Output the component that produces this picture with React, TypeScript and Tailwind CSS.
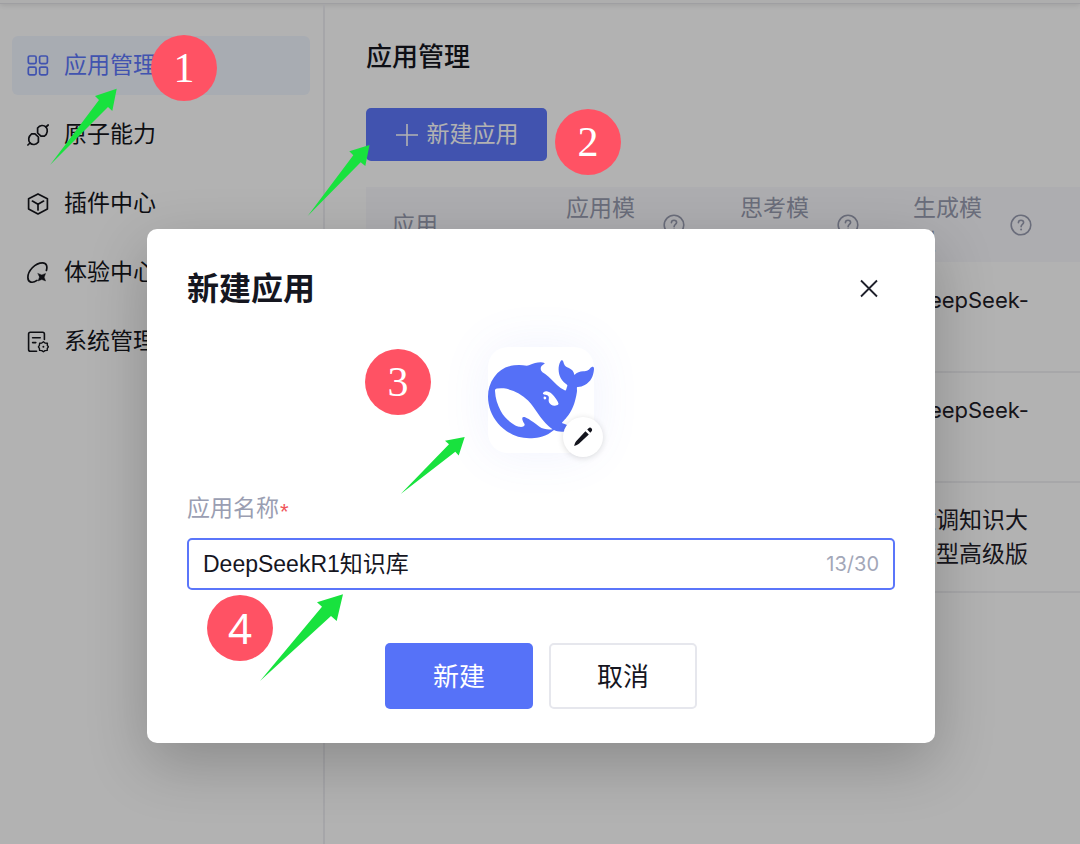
import { useState, type ReactNode } from "react";

const SANS = "font-[Inter,'Noto_Sans_CJK_SC',sans-serif]";

const GridIcon = () => (
  <svg viewBox="0 0 22 22" className="size-[22px]" fill="none" stroke="currentColor" strokeWidth="1.7" aria-hidden="true">
    <rect x="1.3" y="1" width="7.8" height="7.6" rx="1.6" />
    <rect x="12.6" y="1" width="7.8" height="7.6" rx="1.6" />
    <rect x="1.3" y="12.2" width="7.8" height="7.6" rx="1.6" />
    <rect x="12.6" y="12.2" width="7.8" height="7.6" rx="1.6" />
  </svg>
);

const PlugIcon = () => (
  <svg viewBox="0 0 22 22" className="size-[22px]" fill="none" stroke="currentColor" strokeWidth="1.7" strokeLinecap="round" strokeLinejoin="round" aria-hidden="true">
    <path d="M0.9 21 3 19" />
    <path d="M19 3 21.2 1" />
    <path d="M11.4 18V13L8 9.8H4.6C1.2 12.5 1 16.5 3 19 5.5 21.3 9 21 11.4 18Z" />
    <path d="M10.6 4V9L14 12.2H17.4C20.8 9.5 21 5.5 19 3 16.5 0.7 13 1 10.6 4Z" />
  </svg>
);

const CubeIcon = () => (
  <svg viewBox="0 0 22 22" className="size-[22px]" fill="none" stroke="currentColor" strokeWidth="1.7" strokeLinecap="round" strokeLinejoin="round" aria-hidden="true">
    <path d="M11 0.9 20.4 5.8V16L11 21 1.6 16V5.8Z" />
    <path d="M5.4 8.1 11 11.3 16.6 8.1" />
    <path d="M11 11.3V16.9" />
  </svg>
);

const OrbitIcon = () => (
  <svg viewBox="0 0 22 22" className="size-[22px]" fill="none" stroke="currentColor" strokeWidth="1.7" strokeLinecap="round" aria-hidden="true">
    <path d="M19.4 8.5C20.6 4.5 19.5 0.9 15.6 0.9 8 0.9 0.7 9 0.9 15.6 1 20.6 5.5 21.6 10 18.4" />
    <path d="M11 11.4 14.8 12.9 18.6 11.4 17.2 15.2 18.6 19 14.8 17.5 11 19 12.4 15.2Z" fill="currentColor" strokeWidth="0.4" />
  </svg>
);

const SettingsDocIcon = () => (
  <svg viewBox="0 0 22 22" className="size-[22px]" fill="none" stroke="currentColor" strokeWidth="1.6" strokeLinecap="round" strokeLinejoin="round" aria-hidden="true">
    <path d="M9.6 20.2H3.4C2.4 20.2 1.6 19.4 1.6 18.4V3C1.6 2 2.4 1.2 3.4 1.2H15.6C16.6 1.2 17.4 2 17.4 3V8.4" />
    <path d="M5.6 6.8H13.2M5.6 11.6H8.8" />
    <path d="M16.4 10.8 18 12 20.4 12.3 20.3 14.4 21.4 15.8 20.3 17.4 20.2 19.4 18 19.6 16.4 20.8 14.8 19.6 12.6 19.4 12.4 17.4 11.4 15.8 12.4 14.4 12.6 12.3 14.8 12Z" strokeWidth="1.4" />
    <circle cx="16.4" cy="15.8" r="1" fill="currentColor" stroke="none" />
  </svg>
);

const HelpIcon = () => (
  <svg viewBox="0 0 22 22" className="size-[22px] shrink-0" fill="none" stroke="currentColor" strokeWidth="1.6" strokeLinecap="round" aria-hidden="true">
    <circle cx="11" cy="11" r="9.8" />
    <path d="M8.4 8.8C8.4 7.2 9.5 6.2 11 6.2S13.6 7.1 13.6 8.6C13.6 10.4 11.1 10.6 11.1 12.7" />
    <circle cx="11.1" cy="15.6" r="1" fill="currentColor" stroke="none" />
  </svg>
);

const WhaleLogo = () => (
  <svg viewBox="0 0 24 24" className="size-full" fill="#5570f7" role="img" aria-label="DeepSeek">
    <path d="M23.748 4.482c-.254-.124-.364.113-.512.234-.051.039-.094.09-.137.136-.372.397-.806.657-1.373.626-.829-.046-1.537.214-2.163.848-.133-.782-.575-1.248-1.247-1.548-.352-.156-.708-.311-.955-.65-.172-.241-.219-.51-.305-.774-.055-.16-.11-.323-.293-.35-.2-.031-.278.136-.356.276-.313.572-.434 1.202-.422 1.84.027 1.436.633 2.58 1.838 3.393.137.093.172.187.129.323-.082.28-.18.552-.266.833-.055.179-.137.217-.329.14a5.526 5.526 0 01-1.736-1.18c-.857-.828-1.631-1.742-2.597-2.458a11.365 11.365 0 00-.689-.471c-.985-.957.13-1.743.388-1.836.27-.098.093-.432-.779-.428-.872.004-1.67.295-2.687.684a3.055 3.055 0 01-.465.137 9.597 9.597 0 00-2.883-.102c-1.885.21-3.39 1.102-4.497 2.623C.082 8.606-.231 10.684.152 12.85c.403 2.284 1.569 4.175 3.36 5.653 1.858 1.533 3.997 2.284 6.438 2.14 1.482-.085 3.133-.284 4.994-1.86.47.234.962.327 1.78.397.63.059 1.236-.03 1.705-.128.735-.156.684-.837.419-.961-2.155-1.004-1.682-.595-2.113-.926 1.096-1.296 2.746-2.642 3.392-7.003.05-.347.007-.565 0-.845-.004-.17.035-.237.23-.256a4.173 4.173 0 001.545-.475c1.396-.763 1.96-2.015 2.093-3.517.02-.23-.004-.467-.247-.588zM11.581 18c-2.089-1.642-3.102-2.183-3.52-2.16-.392.024-.321.471-.235.763.09.288.207.486.371.739.114.167.192.416-.113.603-.673.416-1.842-.14-1.897-.167-1.361-.802-2.5-1.86-3.301-3.307-.774-1.393-1.224-2.887-1.298-4.482-.02-.386.093-.522.477-.592a4.696 4.696 0 011.529-.039c2.132.312 3.946 1.265 5.468 2.774.868.86 1.525 1.887 2.202 2.891.72 1.066 1.494 2.082 2.48 2.914.348.292.625.514.891.677-.802.09-2.14.11-3.054-.614zm1-6.44a.306.306 0 01.415-.287.302.302 0 01.2.288.306.306 0 01-.31.307.303.303 0 01-.304-.308zm3.11 1.596c-.2.081-.399.151-.59.16a1.245 1.245 0 01-.798-.254c-.274-.23-.47-.358-.552-.758a1.73 1.73 0 01.016-.588c.07-.327-.008-.537-.239-.727-.187-.156-.426-.199-.688-.199a.559.559 0 01-.254-.078c-.11-.054-.2-.172-.114-.338.028-.054.16-.186.192-.21.356-.202.767-.136 1.146.016.352.144.618.408 1.001.782.391.451.462.576.685.914.176.265.336.537.445.848.067.195-.019.354-.25.452z" />
  </svg>
);

const navItems: { label: string; icon: ReactNode; active?: boolean }[] = [
  { label: "应用管理", icon: <GridIcon />, active: true },
  { label: "原子能力", icon: <PlugIcon /> },
  { label: "插件中心", icon: <CubeIcon /> },
  { label: "体验中心", icon: <OrbitIcon /> },
  { label: "系统管理", icon: <SettingsDocIcon /> },
];

const models = [
  { name: "DeepSeek-R1", size: "text-[22px]" },
  { name: "DeepSeek-R1", size: "text-[22px]" },
  { name: "微调知识大模型高级版", size: "text-[23px]" },
];

function Sidebar() {
  return (
    <nav className="flex w-[325px] shrink-0 flex-col gap-[10px] border-r-2 border-[#eeeef2] pl-3 pr-[13px] pt-8">
      {navItems.map((item) => (
        <a
          key={item.label}
          href="#"
          className={
            item.active
              ? "flex h-[59px] items-center gap-[15px] rounded-md bg-[#f1f6ff] px-[15px] text-[23px] text-[#5d78fb]"
              : "flex h-[59px] items-center gap-[15px] rounded-md px-[15px] text-[23px] text-[#15161c]"
          }
        >
          {item.icon}
          {item.label}
        </a>
      ))}
    </nav>
  );
}

function HeadCell({ label }: { label: string }) {
  return (
    <th className="pl-[26px] text-left font-normal">
      <span className="flex items-center gap-[27px]">
        <span className="w-[70px]">{label}</span>
        <HelpIcon />
      </span>
    </th>
  );
}

function AppTable() {
  return (
    <table className="mt-[26px] w-full table-fixed text-[23px] leading-[34px] text-[#1f2029]">
      <colgroup>
        <col className="w-[174px]" />
        <col className="w-[174px]" />
        <col className="w-[173px]" />
        <col />
      </colgroup>
      <thead className="bg-[#f8f8fc] text-[#989cb0]">
        <tr className="h-[75px]">
          <th className="pl-[26px] text-left font-normal">应用</th>
          <HeadCell label="应用模型" />
          <HeadCell label="思考模型" />
          <HeadCell label="生成模型" />
        </tr>
      </thead>
      <tbody>
        {models.map((model, i) => (
          <tr key={i} className="h-[110px] border-b-2 border-[#f0f0f3]">
            <td />
            <td />
            <td />
            <td className={`pl-[26px] pr-[51px] ${model.size}`}>{model.name}</td>
          </tr>
        ))}
      </tbody>
    </table>
  );
}

function CreateDialog() {
  const [name, setName] = useState("DeepSeekR1知识库");
  return (
    <div className="absolute inset-0 flex items-start justify-center bg-black/30 pl-0.5 pt-[229px]">
      <div
        role="dialog"
        aria-labelledby="dialog-title"
        className="w-full max-w-[788px] rounded-[10px] bg-white px-10 pb-[34px] pt-10 shadow-[0_20px_60px_rgba(0,0,0,0.22)]"
      >
        <div className="flex h-10 items-center justify-between">
          <h2 id="dialog-title" className="text-[32px] font-bold text-[#15161f]">新建应用</h2>
          <button type="button" aria-label="关闭" className="p-4">
            <svg viewBox="0 0 20 20" className="size-5" fill="none" stroke="#1f202b" strokeWidth="1.8" aria-hidden="true">
              <path d="M2 1.5 18 17.5M18 1.5 2 17.5" />
            </svg>
          </button>
        </div>

        <div className="relative mx-auto mt-[38px] size-[106px] rounded-[20px] bg-white shadow-[0_0_50px_rgba(85,112,247,0.09)]">
          <WhaleLogo />
          <button
            type="button"
            aria-label="更换图标"
            className="absolute -bottom-1 -right-[9px] flex size-10 items-center justify-center rounded-full bg-white shadow-[0_1px_6px_rgba(0,0,0,0.14)]"
          >
            <svg viewBox="0 0 20 20" className="size-5" fill="#14151e" aria-hidden="true">
              <path d="M12.4 4.2 15.8 7.4 6.2 16.6C4.9 17.7 3 18.7 1.2 18.9 1.5 17 2.4 15.1 3.6 13.8Z" />
              <path d="M14.2 2.6 15.6 1.2C16.4 0.4 17.6 0.4 18.4 1.2 19.3 2.1 19.4 3.3 18.6 4.2L17.3 5.8Z" />
            </svg>
          </button>
        </div>

        <label htmlFor="app-name" className="mt-[38px] flex items-center text-[23px] leading-[34px] text-[#9a9eb2]">
          应用名称
          <span className="ml-px pt-2 text-[22px] leading-none text-[#f0555b] font-['Liberation_Sans',sans-serif]">*</span>
        </label>
        <div className="mt-[13px] flex h-[52px] items-center rounded-[5px] border-2 border-[#5b76fa] px-[14px]">
          <input
            id="app-name"
            value={name}
            maxLength={30}
            onChange={(e) => setName(e.target.value)}
            className="min-w-0 flex-1 font-['Liberation_Sans','Noto_Sans_CJK_SC',sans-serif] text-[23px] text-[#15161f] outline-none"
          />
          <span className="text-[20px] text-[#a3a7b8]">13/30</span>
        </div>

        <div className="mt-[53px] flex justify-center gap-4 text-[26px]">
          <button type="button" className="h-[66px] w-[148px] rounded-[5px] bg-[#5672f8] text-white">新建</button>
          <button type="button" className="h-[66px] w-[148px] rounded-[5px] border-2 border-[#e6e7ed] bg-white text-[#15161f]">取消</button>
        </div>
      </div>
    </div>
  );
}

const arrows = [
  "50,165 99,100 95,96 116.7,88.7 112.3,111 108,107",
  "307.7,216 353.3,155.3 349.3,151.3 369.5,145 365.3,166 360.7,162.3",
  "400.7,494 449,444.3 445,440.7 464.7,437 458.7,455.5 455.3,451.7",
  "260,681 322,606.7 317,602.3 343,594.3 336.7,621 331,616",
];

const BADGE =
  "absolute flex size-[66px] items-center justify-center rounded-full bg-[#ff5264] text-[42px] leading-none text-white";

function Annotations() {
  return (
    <div className="pointer-events-none absolute inset-0 overflow-hidden font-['Liberation_Serif',serif]">
      <svg width="1080" height="844" className="absolute left-0 top-0" fill="#18e23e" aria-hidden="true">
        {arrows.map((points) => (
          <polygon key={points} points={points} />
        ))}
      </svg>
      <span className={`${BADGE} left-[151px] top-[35px]`}>1</span>
      <span className={`${BADGE} left-[555px] top-[109px]`}>2</span>
      <span className={`${BADGE} left-[365px] top-[349px]`}>3</span>
      <span className={`${BADGE} left-[207px] top-[595px] font-['Noto_Sans',sans-serif]`}>4</span>
    </div>
  );
}

export default function App() {
  return (
    <div className={`relative flex min-h-screen flex-col overflow-hidden bg-white ${SANS}`}>
      <header className="h-1 shrink-0 border-b border-[#e4e4e8] bg-[#fafafa] shadow-[0_1px_5px_rgba(0,0,0,0.12)]" />
      <div className="flex flex-1">
        <Sidebar />
        <main className="min-w-0 flex-1 pl-[41px] pt-8">
          <h1 className="text-[26px] font-medium leading-[42px] text-[#15161f]">应用管理</h1>
          <button
            type="button"
            className="mt-[30px] flex h-[53px] w-[181px] items-center justify-center gap-2 rounded-[5px] bg-[#5d78fb] text-[23px] text-white"
          >
            <svg viewBox="0 0 24 24" className="size-6" fill="none" stroke="currentColor" strokeWidth="1.6" aria-hidden="true">
              <path d="M12 1V23M1 12H23" />
            </svg>
            新建应用
          </button>
          <AppTable />
        </main>
      </div>
      <CreateDialog />
      <Annotations />
    </div>
  );
}
